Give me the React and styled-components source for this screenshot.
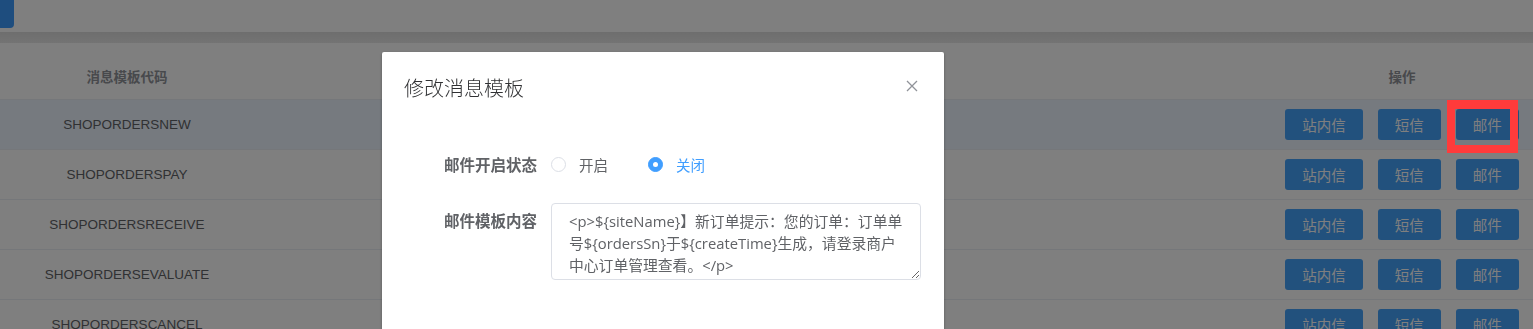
import React from "react";
import styled, { createGlobalStyle } from "styled-components";

const Global = createGlobalStyle`
  html, body { margin: 0; padding: 0; background: #fff; }
  body { font-family: "Noto Sans CJK SC", sans-serif; overflow: hidden; }
  * { box-sizing: border-box; }
`;

const Page = styled.div`
  width: 1533px;
  height: 329px;
  overflow: hidden;
  display: flex;
  flex-direction: column;
  & > * { flex-shrink: 0; }
`;

const TopBar = styled.div`
  height: 32px;
  display: flex;
  align-items: flex-start;
`;

const TopButton = styled.div`
  width: 14px;
  height: 28px;
  background: #3d9bfc;
  border-bottom-right-radius: 4px;
`;

const Band = styled.div`
  height: 11px;
  background: linear-gradient(#dcdcdc, #e8e8e8);
`;

const Row = styled.div`
  display: grid;
  grid-template-columns: 254px 1fr 262px;
  height: ${(p) => (p.$header ? "57px" : "50px")};
  padding-top: ${(p) => (p.$header ? "9px" : "0")};
  border-bottom: 1px solid #ebeef5;
  background: ${(p) => (p.$hover ? "#ecf5ff" : "#fff")};
`;

const Cell = styled.div`
  display: flex;
  align-items: center;
  justify-content: center;
  font-family: ${(p) =>
    p.$header ? '"Noto Sans CJK SC", sans-serif' : '"Liberation Sans", Arial, sans-serif'};
  font-size: 13.5px;
  font-weight: ${(p) => (p.$header ? 700 : 400)};
  color: ${(p) => (p.$header ? "#909399" : "#606266")};
`;

const Actions = styled.div`
  display: flex;
  align-items: center;
  justify-content: center;
  gap: 15px;
`;

const ActionButton = styled.div`
  height: 31px;
  padding: 0 17px;
  border-radius: 3px;
  background: #45a2fa;
  color: #fff;
  font-size: 14.5px;
  display: flex;
  align-items: center;
  justify-content: center;
`;

const Overlay = styled.div`
  position: fixed;
  inset: 0;
  background: rgba(0, 0, 0, 0.5);
`;

const Dialog = styled.div`
  position: fixed;
  left: 382px;
  top: 52px;
  width: 562px;
  height: 320px;
  background: #fff;
  border-radius: 2px;
  box-shadow: 0 1px 3px rgba(0, 0, 0, 0.3);
`;

const DialogHeader = styled.div`
  display: flex;
  align-items: center;
  justify-content: space-between;
  padding: 24px 26px 10px 22px;
`;

const Title = styled.div`
  font-size: 20px;
  line-height: 24px;
  font-weight: 300;
  color: #303133;
`;

const CloseIcon = styled.svg`
  width: 12px;
  height: 12px;
  margin-top: -4px;
`;

const DialogBody = styled.div`
  padding: 34px 22px 0 22px;
  display: flex;
  flex-direction: column;
  gap: 19px;
`;

const FormItem = styled.div`
  display: flex;
  align-items: ${(p) => (p.$top ? "flex-start" : "center")};
  min-height: 40px;
`;

const Label = styled.div`
  width: 147px;
  padding-right: 14px;
  text-align: right;
  font-size: 15.5px;
  font-weight: 700;
  color: #606266;
  line-height: ${(p) => (p.$top ? "34px" : "40px")};
`;

const RadioGroup = styled.div`
  display: flex;
  align-items: center;
  gap: 40px;
`;

const Radio = styled.label`
  display: flex;
  align-items: center;
  gap: 13px;
  font-size: 14.5px;
  color: ${(p) => (p.$checked ? "#409eff" : "#606266")};
`;

const Circle = styled.span`
  width: 15px;
  height: 15px;
  border-radius: 50%;
  border: 1px solid ${(p) => (p.$checked ? "#409eff" : "#dcdfe6")};
  background: ${(p) => (p.$checked ? "#409eff" : "#fff")};
  display: flex;
  align-items: center;
  justify-content: center;
  &::after {
    content: "";
    width: 5px;
    height: 5px;
    border-radius: 50%;
    background: #fff;
    display: ${(p) => (p.$checked ? "block" : "none")};
  }
`;

const TextArea = styled.textarea`
  width: 370px;
  height: 77px;
  padding: 6px 10px 6px 17px;
  border: 1px solid #dcdfe6;
  border-radius: 4px;
  font-family: "Open Sans", "Noto Sans CJK SC", sans-serif;
  font-size: 14.8px;
  line-height: 22px;
  color: #606266;
  resize: vertical;
  overflow: hidden;
  outline: none;
  white-space: pre;
`;

const Annotation = styled.div`
  position: fixed;
  left: 1447px;
  top: 100px;
  width: 71px;
  height: 53px;
  border: 8px solid #ff3b3b;
  border-top-width: 9px;
`;

const rows = [
  "SHOPORDERSNEW",
  "SHOPORDERSPAY",
  "SHOPORDERSRECEIVE",
  "SHOPORDERSEVALUATE",
  "SHOPORDERSCANCEL",
];

const content =
  "<p>${siteName}】新订单提示：您的订单：订单单\n号${ordersSn}于${createTime}生成，请登录商户\n中心订单管理查看。</p>";

export default function App() {
  return (
    <>
      <Global />
      <Page>
        <TopBar>
          <TopButton />
        </TopBar>
        <Band />
        <Row $header>
          <Cell $header>消息模板代码</Cell>
          <Cell $header />
          <Cell $header>操作</Cell>
        </Row>
        {rows.map((code, i) => (
          <Row key={code} $hover={i === 0}>
            <Cell>{code}</Cell>
            <Cell />
            <Actions>
              <ActionButton>站内信</ActionButton>
              <ActionButton>短信</ActionButton>
              <ActionButton>邮件</ActionButton>
            </Actions>
          </Row>
        ))}
      </Page>
      <Overlay />
      <Dialog>
        <DialogHeader>
          <Title>修改消息模板</Title>
          <CloseIcon viewBox="0 0 12 12">
            <path d="M1 1 L11 11 M11 1 L1 11" stroke="#909399" strokeWidth="1.3" fill="none" />
          </CloseIcon>
        </DialogHeader>
        <DialogBody>
          <FormItem>
            <Label>邮件开启状态</Label>
            <RadioGroup>
              <Radio>
                <Circle />
                开启
              </Radio>
              <Radio $checked>
                <Circle $checked />
                关闭
              </Radio>
            </RadioGroup>
          </FormItem>
          <FormItem $top>
            <Label $top>邮件模板内容</Label>
            <TextArea wrap="off" defaultValue={content} />
          </FormItem>
        </DialogBody>
      </Dialog>
      <Annotation />
    </>
  );
}
